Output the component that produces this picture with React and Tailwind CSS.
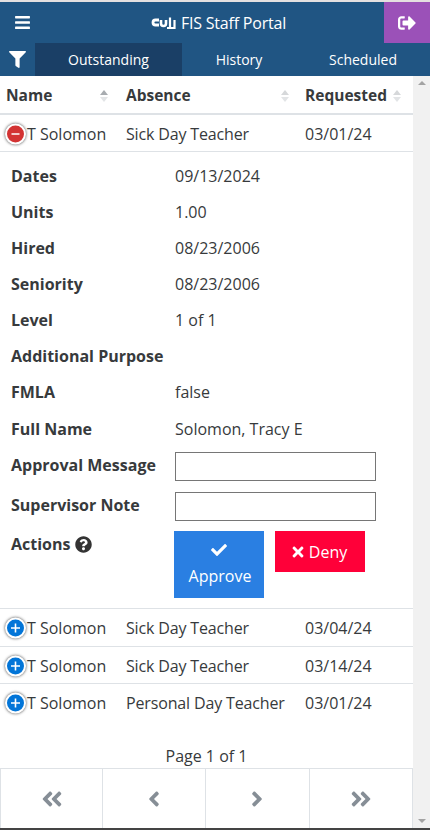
import { FaBars, FaFilter, FaCheck, FaTimes, FaQuestionCircle, FaSignOutAlt, FaAngleDoubleLeft, FaAngleDoubleRight, FaAngleLeft, FaAngleRight } from "react-icons/fa";

const details = [
  ["Dates", "09/13/2024"],
  ["Units", "1.00"],
  ["Hired", "08/23/2006"],
  ["Seniority", "08/23/2006"],
  ["Level", "1 of 1"],
  ["Additional Purpose", ""],
  ["FMLA", "false"],
  ["Full Name", "Solomon, Tracy E"],
];

const others = [
  ["T Solomon", "Sick Day Teacher", "03/04/24"],
  ["T Solomon", "Sick Day Teacher", "03/14/24"],
  ["T Solomon", "Personal Day Teacher", "03/01/24"],
];

const SortArrows = ({ active }) => (
  <span className="flex flex-col gap-[2px]">
    <span
      className={`w-0 h-0 border-x-[4px] border-x-transparent border-b-[5px] ${
        active ? "border-b-[#a8acb0]" : "border-b-[#d6d8da]"
      }`}
    />
    <span className="w-0 h-0 border-x-[4px] border-x-transparent border-t-[5px] border-t-[#e2e4e6]" />
  </span>
);

const ToggleDot = ({ open }) => (
  <span
    className={`flex items-center justify-center w-[17px] h-[17px] rounded-full border-2 border-white shadow-[0_0_3px_#444] absolute left-[5px] top-[19px] -translate-y-1/2 box-content ${
      open ? "bg-[#d33333]" : "bg-[#0275d8]"
    }`}
  >
    <svg width="11" height="11" viewBox="0 0 11 11" stroke="white" strokeWidth="1.6" fill="none">
      <path d={open ? "M1.5 5.5h8" : "M1 5.5h9M5.5 1v9"} />
    </svg>
  </span>
);

const Row = ({ name, absence, date, open, last }) => (
  <div
    className={`relative flex items-center text-[#373a3c] ${open ? "h-[37px] pt-[2px]" : "h-[37.5px] pt-[1.5px]"} ${
      last ? "pb-[1px]" : "border-b border-[#dee2e6]"
    }`}
  >
    <ToggleDot open={open} />
    <span className="w-[126px] pl-[27px]">{name}</span>
    <span className="w-[179px] tracking-[-0.15px]">{absence}</span>
    <span>{date}</span>
  </div>
);

const App = () => {
  return (
    <div className="relative w-[430px] h-[830px] overflow-hidden bg-white font-['Open_Sans','Noto_Sans',sans-serif] text-[16px] border-t-2 border-[#e4e0e0] border-b-2 border-b-[#444]">
      <div className="bg-[#205583] text-white">
        <div className="flex h-[41px] items-center">
          <button className="pl-[14px] w-[60px] text-[17px]">
            <FaBars />
          </button>
          <div className="flex flex-1 items-center justify-center gap-[5px] pr-[7px] text-[16px] tracking-[-0.2px]">
            <svg width="25" height="13" viewBox="0 0 25 13" fill="none" stroke="white">
              <path d="M8 4H4.5a2.5 2.5 0 0 0 0 5H8" strokeWidth="2.8" />
              <path d="M10 4v3.5a2.5 2.5 0 0 0 5 0V4" strokeWidth="2.6" />
              <path d="M19 11V1.5M23.5 4v8H16" strokeWidth="2.2" />
            </svg>
            <span>FIS Staff Portal</span>
          </div>
          <button className="flex h-[41px] w-[46px] items-center justify-center bg-[#9b51b8] text-[18px]">
            <FaSignOutAlt />
          </button>
        </div>
        <div className="flex h-[33px] items-stretch text-[14px]">
          <span className="flex w-[35px] items-center justify-center text-[17px]">
            <FaFilter />
          </span>
          <span className="flex w-[147px] items-center justify-center bg-[#1a3f66]">Outstanding</span>
          <span className="flex w-[114px] items-center justify-center">History</span>
          <span className="flex w-[134px] items-center justify-center">Scheduled</span>
        </div>
      </div>

      <div className="flex">
        <div className="w-[413px]">
          <div className="flex h-[39px] items-center border-b-2 border-t border-[#dee2e6] border-t-white pt-[2px] text-[15.5px] font-bold text-[#373a3c]">
            <span className="flex w-[126px] items-center justify-between pl-[6px] pr-[18px]">
              Name <SortArrows active />
            </span>
            <span className="flex w-[179px] items-center justify-between pr-[16px]">
              Absence <SortArrows />
            </span>
            <span className="flex flex-1 items-center justify-between pr-[12px]">
              Requested <SortArrows />
            </span>
          </div>

          <Row name="T Solomon" absence="Sick Day Teacher" date="03/01/24" open />

          <div className="border-b border-[#dee2e6] pl-[11px] pt-[5px] pb-[10px] text-[#373a3c]">
            {details.map(([label, value], i) => (
              <div
                key={label}
                className={`flex items-center pt-[2px] ${i === details.length - 1 ? "h-[37px]" : "h-[36px]"}`}
              >
                <span className="w-[164px] font-bold">{label}</span>
                <span>{value}</span>
              </div>
            ))}
            <div className="flex h-[41px] items-center">
              <span className="mb-[4px] w-[164px] font-bold">Approval Message</span>
              <input className="h-[29px] w-[201px] border border-[#767676]" />
            </div>
            <div className="flex h-[39px] items-center">
              <span className="mb-[4px] w-[164px] font-bold">Supervisor Note</span>
              <input className="h-[29px] w-[201px] border border-[#767676]" />
            </div>
            <div className="flex items-start pt-[5px]">
              <span className="flex w-[163px] items-center gap-[5px] pt-[1px] font-bold">
                Actions <FaQuestionCircle className="text-[17px] text-[#333]" />
              </span>
              <button className="flex h-[67px] w-[90px] flex-col items-center justify-center gap-[7px] bg-[#2a7fe2] text-white">
                <FaCheck className="text-[16px]" />
                <span className="pl-[2px] leading-[22px]">Approve</span>
              </button>
              <button className="ml-[11px] flex h-[41px] w-[90px] items-center justify-center gap-[3px] bg-[#ff0039] pr-[3px] text-white">
                <FaTimes className="text-[16px]" />
                Deny
              </button>
            </div>
          </div>

          {others.map(([name, absence, date], i) => (
            <Row key={i} name={name} absence={absence} date={date} last={i === others.length - 1} />
          ))}

          <div className="pt-[22.5px] text-center text-[#373a3c]">Page 1 of 1</div>

          <div className="flex h-[60px] border-t border-[#dee2e6] text-[24px] text-[#868e96]">
            {[FaAngleDoubleLeft, FaAngleLeft, FaAngleRight, FaAngleDoubleRight].map((Icon, i) => (
              <span
                key={i}
                className="flex flex-1 items-center justify-center border-l border-[#dee2e6] first:w-[102px] first:flex-none last:border-r"
              >
                <Icon />
              </span>
            ))}
          </div>
        </div>

        <div className="flex w-[17px] flex-col items-center justify-between bg-[#f1f1f1] py-[5px]">
          <span className="w-0 h-0 border-x-[4px] border-x-transparent border-b-[4px] border-b-[#a3a3a3]" />
          <span className="w-0 h-0 border-x-[4px] border-x-transparent border-t-[4px] border-t-[#a3a3a3]" />
        </div>
      </div>
    </div>
  );
};

export default App;
